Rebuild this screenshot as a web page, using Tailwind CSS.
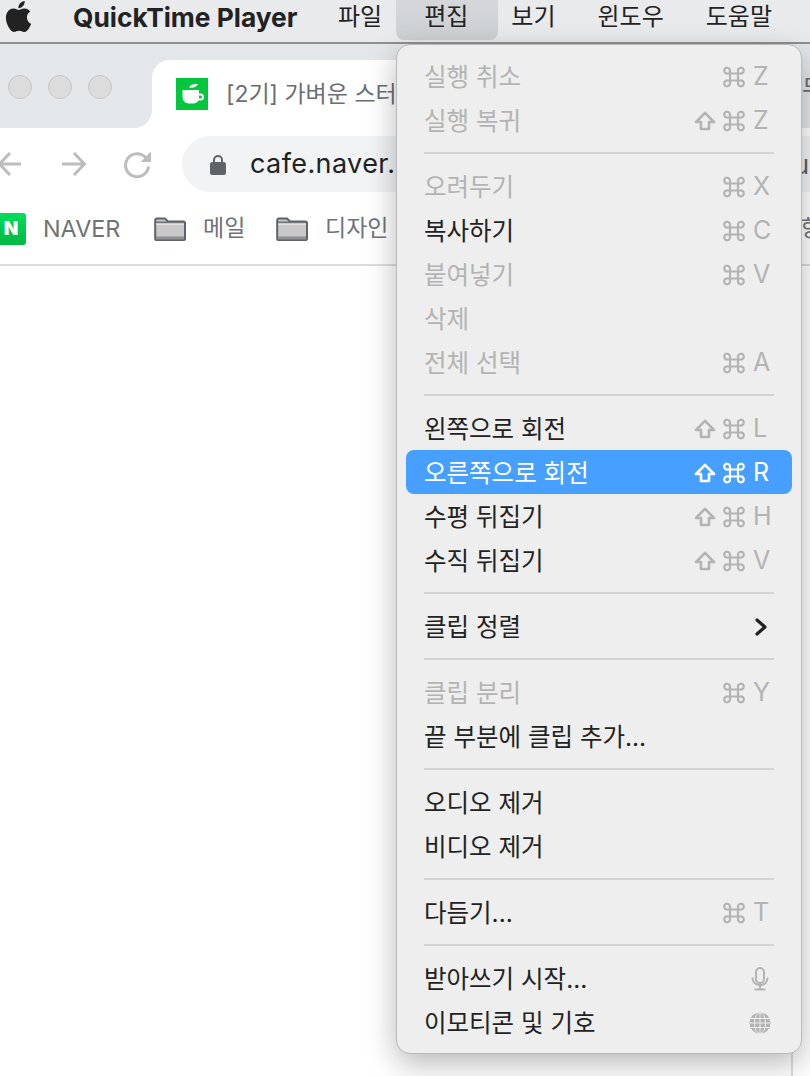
<!DOCTYPE html>
<html lang="ko">

<head>
    <meta charset="UTF-8">
    <title>QuickTime Player</title>
    <script src="https://cdn.jsdelivr.net/npm/@tailwindcss/browser@4"></script>
</head>

<body class="bg-white">
    <svg class="hidden">
        <symbol id="shift" viewBox="0 0 22 20"><path d="M11 1.8 20 11h-5v7H7v-7H2Z" fill="none" stroke="currentColor" stroke-width="2.6" stroke-linejoin="round"/></symbol>
        <symbol id="cmd" viewBox="0 0 22 22"><path d="M7 7.5h8v7H7Zm0 0H4.5a2.9 2.9 0 1 1 2.5-2.5V7.500Zm8 0V5a2.900 2.900 0 1 1 2.500 2.500H15Zm0 7h2.500a2.900 2.900 0 1 1-2.500 2.500V14.500Zm-8 0V17a2.900 2.900 0 1 1-2.500-2.500H7Z" fill="none" stroke="currentColor" stroke-width="2.200"/></symbol>
        <symbol id="folder" viewBox="0 0 32 24"><path d="M1.200 3.500A2 2 0 0 1 3 1.500h8l3 3h15.500a1.500 1.500 0 0 1 1.500 1.500v16a1 1 0 0 1-1 1H2.200a1 1 0 0 1-1-1Z" fill="#c9c9c9" stroke="#5f6368" stroke-width="2"/><path d="M1.500 5.500h29" stroke="#5f6368" stroke-width="2"/><path d="M2 6.500h28v-1H2ZM2 19.500h28v3H2Z" fill="#8e9094"/><path d="M2 6.500h28v1H2Z" fill="#fff"/></symbol>
    </svg>

    <div class="relative w-[810px] h-[1076px] overflow-hidden flex flex-col font-['Inter','Noto_Sans_CJK_KR',sans-serif] text-[24px] text-[#222]">

        <!-- menu bar -->
        <div class="flex items-center h-[44px] shrink-0 bg-[#e9eaec] border-b-2 border-[#8e8f91] pb-[2px]">
            <svg class="ml-[3px] w-[31px] h-[31px] -mt-[8px] shrink-0" viewBox="0 0 24 24" fill="#222"><path d="M12.152 6.896c-.948 0-2.415-1.078-3.960-1.040-2.040.027-3.910 1.183-4.961 3.014-2.117 3.675-.546 9.103 1.519 12.090 1.013 1.454 2.208 3.090 3.792 3.039 1.520-.065 2.090-.987 3.935-.987 1.831 0 2.350.987 3.960.948 1.637-.026 2.676-1.480 3.676-2.948 1.156-1.688 1.636-3.325 1.662-3.415-.039-.013-3.182-1.221-3.220-4.857-.026-3.040 2.480-4.494 2.597-4.559-1.429-2.090-3.623-2.324-4.390-2.376-2-.156-3.675 1.090-4.610 1.090zM15.530 3.830c.843-1.012 1.400-2.427 1.245-3.830-1.207.052-2.662.805-3.532 1.818-.780.896-1.454 2.338-1.273 3.714 1.338.104 2.715-.688 3.559-1.701"/></svg>
            <span class="ml-[39px] font-bold text-[26.3px] -mt-[5px] w-[244px] shrink-0 whitespace-nowrap">QuickTime Player</span>
            <div class="flex h-[41px] -mt-[2px] items-center ml-[1px]">
                <span class="pl-[20px] pr-[22px] pb-[5px]">파일</span>
                <span class="flex items-center h-[41px] -mx-[8px] pl-[28px] pr-[30px] pb-[5px] bg-gradient-to-b from-[#d5d7da] to-[#cdd0d3] rounded-b-[8px]">편집</span>
                <span class="px-[21px] pb-[5px]">보기</span>
                <span class="px-[21px] pb-[5px]">윈도우</span>
                <span class="px-[21px] pb-[5px]">도움말</span>
            </div>
        </div>

        <!-- tab strip -->
        <div class="flex h-[84px] shrink-0 bg-white">
            <div class="flex w-[152px] shrink-0 items-center gap-[16px] pl-[8px] pt-[2px] bg-[#e4e7ea] rounded-br-[18px]">
                <span class="w-[24px] h-[24px] rounded-full bg-[#dcdcdc] border border-[#c6c6c6]"></span>
                <span class="w-[24px] h-[24px] rounded-full bg-[#dcdcdc] border border-[#c6c6c6]"></span>
                <span class="w-[24px] h-[24px] rounded-full bg-[#dcdcdc] border border-[#c6c6c6]"></span>
            </div>
            <div class="flex flex-1 bg-[#e4e7ea] pt-[16px]">
                <div class="flex w-[630px] items-center pl-[24px] bg-white rounded-t-[18px]">
                    <svg class="w-[32px] h-[32px] shrink-0" viewBox="0 0 32 32"><rect width="32" height="32" fill="#00c73c"/><path d="M13 9.500c1-3 5-4 9-3.500-1 3-5 4.500-9 3.500Z" fill="#fff"/><path d="M6.500 12h16.500v3.500h1.500a3.500 3.500 0 0 1 0 7H22.500c-1.300 2-3 3-5 3h-5c-3.500 0-6-3-6-7Z" fill="#fff"/><path d="M23 17.500h1.500a1.300 1.300 0 0 1 0 3H23Z" fill="#00c73c"/></svg>
                    <span class="ml-[18px] text-[23px] text-[#6b6e72] whitespace-nowrap">[2기] 가벼운 스터</span>
                </div>
                <span class="pl-[20px] pt-[11px] text-[#6b6e72]">무</span>
            </div>
        </div>

        <!-- toolbar -->
        <div class="flex h-[68px] shrink-0 pt-[8px] items-start bg-white">
            <svg class="ml-[-3px] mt-[15px] w-[26px] h-[26px] shrink-0" viewBox="0 0 26 26" fill="none" stroke="#bdbdbd" stroke-width="3"><path d="M24 13H3M13 2 2.500 13 13 24"/></svg>
            <svg class="ml-[38px] mt-[15px] w-[26px] h-[26px] shrink-0" viewBox="0 0 26 26" fill="none" stroke="#bdbdbd" stroke-width="3"><path d="M1 13h22M13 2l10.500 11L13 24"/></svg>
            <svg class="ml-[37px] mt-[14px] w-[28px] h-[28px] shrink-0" viewBox="0 0 28 28"><path d="M22 8a11.500 11.500 0 1 0 2.500 8.500" fill="none" stroke="#bdbdbd" stroke-width="3"/><path d="M27 1.500V12H16.500Z" fill="#bdbdbd"/></svg>
            <div class="flex ml-[30px] flex-1 h-[56px] items-center bg-[#f1f3f4] rounded-l-[28px] pl-[28px] pr-[1px]">
                <svg class="w-[16px] h-[21px] shrink-0" viewBox="0 0 16 21" fill="#5f6368"><path d="M4 9V6a4 4 0 0 1 8 0v3" fill="none" stroke="#5f6368" stroke-width="2"/><rect y="8" width="16" height="13" rx="2.500"/></svg>
                <span class="ml-[24px] text-[27px] tracking-[0.4px] text-[#202124]">cafe.naver.</span>
                <span class="ml-auto text-[26px] text-[#5f6368]">u</span>
            </div>
        </div>

        <!-- bookmarks -->
        <div class="flex h-[70px] shrink-0 items-center pb-[3px] border-b-2 border-[#dddddd] text-[23px] text-[#6f7377]">
            <span class="flex w-[32px] h-[32px] ml-[-6px] shrink-0 items-center justify-center pl-[2px] rounded-[3px] bg-gradient-to-b from-[#00de5a] to-[#00b843] text-white font-black text-[19px] leading-none">N</span>
            <span class="ml-[17px] w-[111px] shrink-0 text-[23.4px]">NAVER</span>
            <svg class="w-[32px] h-[24px] shrink-0"><use href="#folder"/></svg>
            <span class="ml-[17px] w-[73px] shrink-0">메일</span>
            <svg class="w-[32px] h-[24px] shrink-0"><use href="#folder"/></svg>
            <span class="ml-[17px] shrink-0">디자인</span>
            <span class="ml-auto -mr-[12px]">항</span>
        </div>

        <!-- page -->
        <div class="flex-1 w-[793px] bg-white border-r-2 border-[#dddddd]"></div>

        <!-- edit menu -->
        <div class="absolute left-[396px] top-[44px] w-[406px] h-[1010px] py-[9px] text-[24.5px] bg-[#eeeeee] border border-[#b9b9b9] rounded-[14px] shadow-[0_10px_30px_rgba(0,0,0,0.28)]">
            <div class="flex h-11 mx-[9px] pt-[2px] pl-[18px] pr-[16px] items-center text-[#b3b3b3]"><span>실행 취소</span><svg class="ml-auto w-[22px] h-[22px]"><use href="#cmd"/></svg><span class="w-[23px] ml-[8px] text-[25px]">Z</span></div>
            <div class="flex h-11 mx-[9px] pt-[2px] pl-[18px] pr-[16px] items-center text-[#b3b3b3]"><span>실행 복귀</span><svg class="ml-auto w-[22px] h-[20px]"><use href="#shift"/></svg><svg class="ml-[7px] w-[22px] h-[22px]"><use href="#cmd"/></svg><span class="w-[23px] ml-[8px] text-[25px]">Z</span></div>
            <div class="flex h-[22px] mx-[27px] items-center"><div class="w-full h-[2px] bg-[#d3d3d3]"></div></div>

            <div class="flex h-11 mx-[9px] pt-[2px] pl-[18px] pr-[16px] items-center text-[#b3b3b3]"><span>오려두기</span><svg class="ml-auto w-[22px] h-[22px]"><use href="#cmd"/></svg><span class="w-[23px] ml-[8px] text-[25px]">X</span></div>
            <div class="flex h-11 mx-[9px] pt-[2px] pl-[18px] pr-[16px] items-center"><span>복사하기</span><svg class="ml-auto w-[22px] h-[22px] text-[#b3b3b3]"><use href="#cmd"/></svg><span class="w-[23px] ml-[8px] text-[25px] text-[#b3b3b3]">C</span></div>
            <div class="flex h-11 mx-[9px] pt-[2px] pl-[18px] pr-[16px] items-center text-[#b3b3b3]"><span>붙여넣기</span><svg class="ml-auto w-[22px] h-[22px]"><use href="#cmd"/></svg><span class="w-[23px] ml-[8px] text-[25px]">V</span></div>
            <div class="flex h-11 mx-[9px] pt-[2px] pl-[18px] pr-[16px] items-center text-[#b3b3b3]"><span>삭제</span></div>
            <div class="flex h-11 mx-[9px] pt-[2px] pl-[18px] pr-[16px] items-center text-[#b3b3b3]"><span>전체 선택</span><svg class="ml-auto w-[22px] h-[22px]"><use href="#cmd"/></svg><span class="w-[23px] ml-[8px] text-[25px]">A</span></div>
            <div class="flex h-[22px] mx-[27px] items-center"><div class="w-full h-[2px] bg-[#d3d3d3]"></div></div>

            <div class="flex h-11 mx-[9px] pt-[2px] pl-[18px] pr-[16px] items-center"><span>왼쪽으로 회전</span><svg class="ml-auto w-[22px] h-[20px] text-[#b3b3b3]"><use href="#shift"/></svg><svg class="ml-[7px] w-[22px] h-[22px] text-[#b3b3b3]"><use href="#cmd"/></svg><span class="w-[23px] ml-[8px] text-[25px] text-[#b3b3b3]">L</span></div>
            <div class="flex h-11 mx-[9px] pt-[2px] pl-[18px] pr-[16px] items-center bg-[#47a0ff] rounded-[8px] text-white"><span>오른쪽으로 회전</span><svg class="ml-auto w-[22px] h-[20px]"><use href="#shift"/></svg><svg class="ml-[7px] w-[22px] h-[22px]"><use href="#cmd"/></svg><span class="w-[23px] ml-[8px] text-[25px]">R</span></div>
            <div class="flex h-11 mx-[9px] pt-[2px] pl-[18px] pr-[16px] items-center"><span>수평 뒤집기</span><svg class="ml-auto w-[22px] h-[20px] text-[#b3b3b3]"><use href="#shift"/></svg><svg class="ml-[7px] w-[22px] h-[22px] text-[#b3b3b3]"><use href="#cmd"/></svg><span class="w-[23px] ml-[8px] text-[25px] text-[#b3b3b3]">H</span></div>
            <div class="flex h-11 mx-[9px] pt-[2px] pl-[18px] pr-[16px] items-center"><span>수직 뒤집기</span><svg class="ml-auto w-[22px] h-[20px] text-[#b3b3b3]"><use href="#shift"/></svg><svg class="ml-[7px] w-[22px] h-[22px] text-[#b3b3b3]"><use href="#cmd"/></svg><span class="w-[23px] ml-[8px] text-[25px] text-[#b3b3b3]">V</span></div>
            <div class="flex h-[22px] mx-[27px] items-center"><div class="w-full h-[2px] bg-[#d3d3d3]"></div></div>

            <div class="flex h-11 mx-[9px] pt-[2px] pl-[18px] pr-[24px] items-center"><span>클립 정렬</span><svg class="ml-auto w-[14px] h-[20px]" viewBox="0 0 14 20" fill="none" stroke="#222" stroke-width="3.200" stroke-linecap="round" stroke-linejoin="round"><path d="M3 3l8 7-8 7"/></svg></div>
            <div class="flex h-[22px] mx-[27px] items-center"><div class="w-full h-[2px] bg-[#d3d3d3]"></div></div>

            <div class="flex h-11 mx-[9px] pt-[2px] pl-[18px] pr-[16px] items-center text-[#b3b3b3]"><span>클립 분리</span><svg class="ml-auto w-[22px] h-[22px]"><use href="#cmd"/></svg><span class="w-[23px] ml-[8px] text-[25px]">Y</span></div>
            <div class="flex h-11 mx-[9px] pt-[2px] pl-[18px] pr-[16px] items-center"><span>끝 부분에 클립 추가...</span></div>
            <div class="flex h-[22px] mx-[27px] items-center"><div class="w-full h-[2px] bg-[#d3d3d3]"></div></div>

            <div class="flex h-11 mx-[9px] pt-[2px] pl-[18px] pr-[16px] items-center"><span>오디오 제거</span></div>
            <div class="flex h-11 mx-[9px] pt-[2px] pl-[18px] pr-[16px] items-center"><span>비디오 제거</span></div>
            <div class="flex h-[22px] mx-[27px] items-center"><div class="w-full h-[2px] bg-[#d3d3d3]"></div></div>

            <div class="flex h-11 mx-[9px] pt-[2px] pl-[18px] pr-[16px] items-center"><span>다듬기...</span><svg class="ml-auto w-[22px] h-[22px] text-[#b3b3b3]"><use href="#cmd"/></svg><span class="w-[23px] ml-[8px] text-[25px] text-[#b3b3b3]">T</span></div>
            <div class="flex h-[22px] mx-[27px] items-center"><div class="w-full h-[2px] bg-[#d3d3d3]"></div></div>

            <div class="flex h-11 mx-[9px] pt-[2px] pl-[18px] pr-[23px] items-center"><span>받아쓰기 시작...</span><svg class="ml-auto w-[18px] h-[24px]" viewBox="0 0 18 24" fill="none" stroke="#b3b3b3" stroke-width="2"><rect x="5" y="1" width="8" height="15" rx="4"/><path d="M1.500 10.500c0 4.500 3 7.500 7.500 7.500s7.500-3 7.500-7.500M9 18v4M3.500 22.500h11"/></svg></div>
            <div class="flex h-11 mx-[9px] pt-[2px] pl-[18px] pr-[21px] items-center"><span>이모티콘 및 기호</span><svg class="ml-auto w-[22px] h-[22px]" viewBox="0 0 22 22" fill="#b3b3b3" stroke="#eeeeee" stroke-width="1"><circle cx="11" cy="11" r="10.500" stroke="none"/><path d="M11 .5v21M2 6.500h18M1 11h20M2 15.500h18" fill="none"/><ellipse cx="11" cy="11" rx="5.500" ry="10.500" fill="none"/></svg></div>
        </div>
    </div>
</body>

</html>
